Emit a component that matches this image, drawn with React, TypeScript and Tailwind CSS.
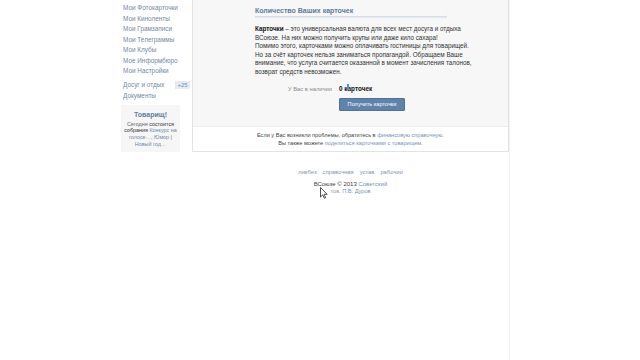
import React from "react";

const menu = [
  "Мои Фотокарточки",
  "Мои Киноленты",
  "Мои Грамзаписи",
  "Мои Телеграммы",
  "Мои Клубы",
  "Мое Информбюро",
  "Мои Настройки",
];

export default function App() {
  return (
    <div
      className="relative w-[640px] h-[360px] overflow-hidden bg-white text-[#222]"
      style={{ fontFamily: '"Liberation Sans", Arial, sans-serif' }}
    >
      <div className="ml-[121px] w-[389px] h-[360px] border-r border-[#f1f1f1] flex flex-col">
        <div className="flex">
          {/* sidebar */}
          <div className="w-[71px] flex flex-col pt-[3px]">
            {menu.map((m) => (
              <div key={m} className="pl-[2px] text-[6.4px] leading-[10.5px] text-[#7389a4] whitespace-nowrap">
                {m}
              </div>
            ))}
            <div className="mt-[3px] flex items-center justify-between pl-[2px] pr-[2px] h-[10px]">
              <span className="text-[6.4px] leading-[10px] text-[#7389a4] whitespace-nowrap">Досуг и отдых</span>
              <span className="bg-[#e6ebf0] text-[#6f8fb5] text-[6px] leading-[8px] px-[2px] w-[15px] text-center">+25</span>
            </div>
            <div className="pl-[2px] text-[6.4px] leading-[11px] text-[#7389a4] whitespace-nowrap">Документы</div>
            <div className="mt-[4px] w-[59px] h-[47px] bg-[#f6f6f6] flex flex-col items-center pt-[5px]">
              <div className="text-[7px] leading-[9px] font-bold text-[#5f7ea3]">Товарищ!</div>
              <div className="mt-[2px] text-[5.4px] leading-[6.7px] text-center text-[#666]">
                Сегодня <span className="text-[#333]">состоится</span>
                <br />
                <span className="text-[#333]">собрания</span> <span className="text-[#6f89a8]">Конкурс на</span>
                <br />
                <span className="text-[#6f89a8]">голосе…</span>, <span className="text-[#6f89a8]">Юмор</span> |
                <br />
                <span className="text-[#6f89a8]">Новый год…</span>
              </div>
            </div>
          </div>

          {/* main panel */}
          <div className="w-[317px] h-[152px] border border-t-0 border-[#e3e3e3] flex flex-col">
            <div className="h-[126px] bg-[#f7f7f7] pl-[62px] pr-[60px] pt-[7px]">
              <div className="w-[192px] text-[7px] leading-[8px] font-bold text-[#607a9c] pb-[1px] border-b border-[#d8dee6] shadow-[0_1px_1px_#e6eaef]">
                Количество Ваших карточек
              </div>
              <div className="mt-[8px] text-[6.3px] leading-[8.6px] text-[#333] whitespace-nowrap">
                <div>
                  <b className="text-[#111]">Карточки</b> – это универсальная валюта для всех мест досуга и отдыха
                </div>
                <div>ВСоюзе. На них можно получить крупы или даже кило сахара!</div>
                <div>Помимо этого, карточками можно оплачивать гостиницы для товарищей.</div>
                <div>Но за счёт карточек нельзя заниматься пропагандой. Обращаем Ваше</div>
                <div>внимание, что услуга считается оказанной в момент зачисления талонов,</div>
                <div>возврат средств невозможен.</div>
              </div>
              <div className="mt-[8px] flex items-center h-[9px]">
                <div className="w-[77px] text-right text-[5.8px] text-[#8a8a8a] whitespace-nowrap">У Вас в наличии</div>
                <div className="ml-[7px] text-[6.4px] font-bold text-[#111] whitespace-nowrap">0 карточек</div>
              </div>
              <div className="mt-[4px] ml-[84px] w-[66px] h-[13px] bg-[#5f83ab] border border-[#4d729b] rounded-[1px] flex items-center justify-center text-[5.6px] text-white whitespace-nowrap">
                Получить карточки
              </div>
            </div>
            <div className="flex-1 bg-white border-t border-[#ececec] flex flex-col items-center justify-center pb-[1px] text-[5.6px] leading-[8px] text-[#444] whitespace-nowrap">
              <div>
                Если у Вас возникли проблемы, обратитесь в <span className="text-[#7a93b2]">финансовую справочную.</span>
              </div>
              <div>
                Вы также можете <span className="text-[#7a93b2]">поделиться карточками с товарищем.</span>
              </div>
            </div>
          </div>
        </div>

        {/* footer */}
        <div className="ml-[71px] w-[317px] flex flex-col items-center pt-[16px]">
          <div className="flex gap-[6px] text-[5.8px] leading-[8px] text-[#8096b0] whitespace-nowrap">
            <span>ликбез</span>
            <span>справочная</span>
            <span>устав</span>
            <span>рабочии</span>
          </div>
          <div className="mt-[4px] text-[6px] leading-[8px] text-[#444] whitespace-nowrap">
            ВСоюзе © 2013 <span className="text-[#7a93b2]">Советский</span>
          </div>
          <div className="text-[5.6px] leading-[7px] text-[#999] whitespace-nowrap">
            тов. <span className="text-[#7a93b2]">П.В. Дуров</span>
          </div>
        </div>
      </div>

      {/* text caret highlight */}
      <div className="absolute left-[347px] top-[84px] w-[2px] h-[6px] bg-[#5b8fd6]" />

      {/* mouse cursor */}
      <svg className="absolute left-[320px] top-[187px]" width="8" height="12" viewBox="0 0 8 12">
        <path d="M0.5 0.5 L0.5 10 L2.8 7.8 L4.4 11.3 L5.7 10.7 L4.2 7.3 L7.2 7.3 Z" fill="#fff" stroke="#222" strokeWidth="0.8" strokeLinejoin="round" />
      </svg>
    </div>
  );
}
